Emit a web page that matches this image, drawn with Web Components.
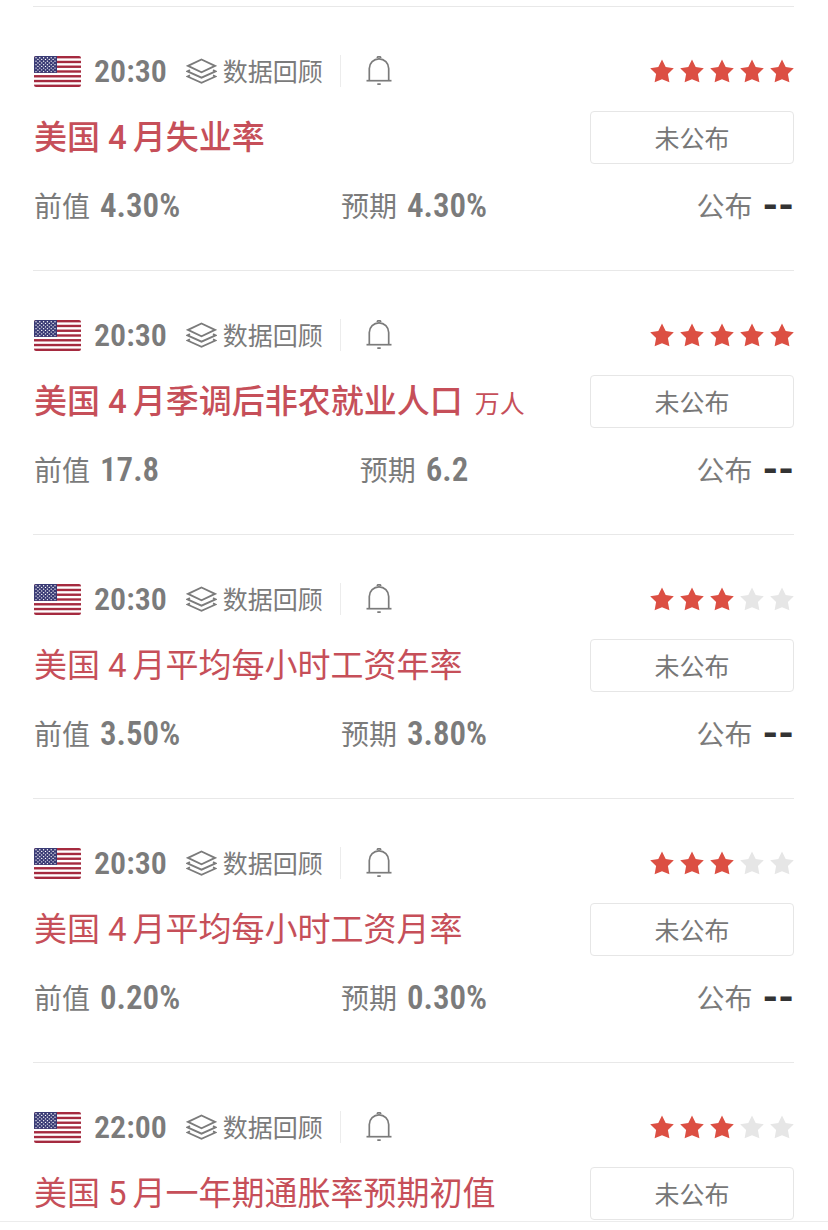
<!DOCTYPE html>
<html lang="zh-CN">
<head>
<meta charset="utf-8">
<meta name="viewport" content="width=device-width, initial-scale=1">
<title>财经日历</title>
<style>
  body {
    margin: 0;
    background: #fff;
    color: #7b7b7b;
    font-family: "Open Sans", "Noto Sans CJK SC", sans-serif;
  }
</style>
</head>
<body>
<calendar-list>
  <calendar-event time="20:30" stars="5" important previous="4.30%" forecast="4.30%">美国<span>4</span>月失业率</calendar-event>
  <calendar-event time="20:30" stars="5" important previous="17.8" forecast="6.2">美国<span>4</span>月季调后非农就业人口<small slot="unit">万人</small></calendar-event>
  <calendar-event time="20:30" stars="3" previous="3.50%" forecast="3.80%">美国<span>4</span>月平均每小时工资年率</calendar-event>
  <calendar-event time="20:30" stars="3" previous="0.20%" forecast="0.30%">美国<span>4</span>月平均每小时工资月率</calendar-event>
  <calendar-event time="22:00" stars="3">美国<span>5</span>月一年期通胀率预期初值</calendar-event>
</calendar-list>

<script>
class UsFlag extends HTMLElement {
  constructor() {
    super();
    this.attachShadow({ mode: 'open' });
    let stripes = '';
    for (let i = 0; i < 7; i++) {
      stripes += `<rect y="${i * 4.8}" width="47" height="2.4" fill="#a52a3f"/>`;
    }
    let stars = '';
    for (let row = 0; row < 9; row++) {
      const odd = row % 2;
      for (let col = 0; col < 6 - odd; col++) {
        const x = 2 + col * 3.8 + odd * 1.9;
        stars += `<circle cx="${x}" cy="${1.7 + row * 1.75}" r="0.7"/>`;
      }
    }
    this.shadowRoot.innerHTML = `
      <style>
        :host { display: block; }
        svg { display: block; border-radius: 2px; }
      </style>
      <svg width="47" height="31" viewBox="0 0 47 31.2" preserveAspectRatio="none" role="img" aria-label="美国">
        <rect width="47" height="32" fill="#fff"/>
        ${stripes}
        <rect width="23" height="17" fill="#3a3b75"/>
        <g fill="#fff">${stars}</g>
      </svg>
    `;
  }
}

class StarRating extends HTMLElement {
  constructor() {
    super();
    this.attachShadow({ mode: 'open' });
  }

  connectedCallback() {
    const value = Number(this.getAttribute('value'));
    let stars = '';
    for (let i = 0; i < 5; i++) {
      stars += `
        <svg class="${i < value ? 'on' : ''}" viewBox="0 0 24 24" aria-hidden="true">
          <path d="M12 .5l3.700 7.600 8.100 1.100-5.900 5.700 1.500 8.400L12 20.200l-7.400 3.100 1.500-8.400L.2 9.200l8.100-1.100z"/>
        </svg>`;
    }
    this.shadowRoot.innerHTML = `
      <style>
        :host { display: flex; gap: 6px; }
        svg { width: 24px; height: 24px; fill: #e6e6e6; }
        .on { fill: #dc4f43; }
      </style>
      ${stars}
    `;
  }
}

class DataReview extends HTMLElement {
  constructor() {
    super();
    this.attachShadow({ mode: 'open' });
    this.shadowRoot.innerHTML = `
      <style>
        :host { display: block; }
        a {
          display: flex;
          align-items: center;
          gap: 6px;
          color: inherit;
          text-decoration: none;
          font-size: 25px;
          line-height: 32px;
        }
        svg { display: block; }
      </style>
      <a href="#review">
        <svg width="31" height="26" viewBox="0 0 31 26" fill="none" stroke="currentColor" stroke-width="1.9" aria-hidden="true">
          <path d="M15.500 1.500L29 7.900l-13.500 6.400L2 7.900z"/>
          <path d="M4 12.100l-2.500 1.200 14 6.300 14-6.300-2.500-1.200"/>
          <path d="M4 17.300l-2.500 1.200 14 6.300 14-6.300-2.500-1.200"/>
        </svg>
        <slot></slot>
      </a>
    `;
  }
}

class RemindButton extends HTMLElement {
  constructor() {
    super();
    this.attachShadow({ mode: 'open' });
    this.shadowRoot.innerHTML = `
      <style>
        :host { display: block; }
        button {
          display: block;
          padding: 0;
          border: 0;
          background: none;
          color: inherit;
          cursor: pointer;
        }
        svg { display: block; }
      </style>
      <button type="button" aria-label="提醒">
        <svg width="26" height="30" viewBox="0 0 26 30" fill="none" stroke="currentColor" stroke-width="1.700" aria-hidden="true">
          <path d="M3.300 24.600V12.500a9.700 9.700 0 0 1 19.400 0v12.100"/>
          <path d="M.5 24.700h25"/>
          <path d="M11.300 2a1.700 1.400 0 0 1 3.400 0M11.300 28.200h3.400"/>
        </svg>
      </button>
    `;
  }
}

class DataValue extends HTMLElement {
  constructor() {
    super();
    this.attachShadow({ mode: 'open' });
    this.shadowRoot.innerHTML = `
      <style>
        :host {
          display: flex;
          align-items: center;
          gap: 10px;
          font-size: 28px;
          line-height: 40px;
        }
        b {
          font-family: "Roboto Condensed", Roboto, sans-serif;
          font-size: 33px;
          font-weight: 600;
        }
        :host([pending]) b {
          color: #333;
          font-family: Roboto, sans-serif;
          font-size: 40px;
          font-weight: 700;
        }
      </style>
      <span></span><b><slot></slot></b>
    `;
  }

  connectedCallback() {
    this.shadowRoot.querySelector('span').textContent = this.getAttribute('label');
  }
}

class CalendarEvent extends HTMLElement {
  constructor() {
    super();
    this.attachShadow({ mode: 'open' });
  }

  connectedCallback() {
    const previous = this.getAttribute('previous');
    const values = previous === null ? '' : `
      <div class="values">
        <data-value label="前值">${previous}</data-value>
        <data-value label="预期">${this.getAttribute('forecast')}</data-value>
        <data-value label="公布" pending>--</data-value>
      </div>`;

    this.shadowRoot.innerHTML = `
      <style>
        :host {
          display: block;
          margin: 0 34px 0 33px;
          padding: 48px 0 0 1px;
          border-top: 1px solid #e8e8e8;
        }
        .head {
          display: flex;
          align-items: center;
          height: 32px;
        }
        time {
          margin: 0 19px 0 13px;
          font: 600 32px/32px "Roboto Condensed", Roboto, sans-serif;
        }
        .divider {
          width: 1px;
          height: 32px;
          margin: 0 25px 0 17px;
          background: #ececec;
        }
        star-rating { margin-left: auto; }
        .main {
          display: flex;
          align-items: center;
          justify-content: space-between;
          margin-top: 24px;
        }
        h2 {
          margin: 0;
          color: #c64f59;
          font-size: 33px;
          font-weight: 400;
          line-height: 52px;
        }
        :host([important]) h2 { font-weight: 500; }
        ::slotted(span) {
          margin: 0 6px 0 8px;
          font-family: Roboto, sans-serif;
        }
        ::slotted(small) {
          margin-left: 12px;
          font-size: 25px;
          font-weight: 400;
          line-height: 32px;
        }
        .status {
          width: 204px;
          height: 53px;
          padding: 0;
          border: 1px solid #e6e6e6;
          border-radius: 4px;
          background: #fff;
          color: #777;
          font: inherit;
          font-size: 25px;
          line-height: 32px;
        }
        .values {
          display: grid;
          grid-template-columns: 1fr auto 1fr;
          padding: 22px 0 44px;
        }
        data-value:last-child { justify-self: end; }
      </style>
      <div class="head">
        <us-flag></us-flag>
        <time>${this.getAttribute('time')}</time>
        <data-review>数据回顾</data-review>
        <div class="divider"></div>
        <remind-button></remind-button>
        <star-rating value="${this.getAttribute('stars')}"></star-rating>
      </div>
      <div class="main">
        <h2><slot></slot><slot name="unit"></slot></h2>
        <button class="status" type="button">未公布</button>
      </div>
      ${values}
    `;
  }
}

class CalendarList extends HTMLElement {
  constructor() {
    super();
    this.attachShadow({ mode: 'open' });
    this.shadowRoot.innerHTML = `
      <style>
        :host {
          display: block;
          padding: 6px 0 1px;
          border-bottom: 1px solid #ececec;
        }
      </style>
      <slot></slot>
    `;
  }
}

customElements.define('us-flag', UsFlag);
customElements.define('star-rating', StarRating);
customElements.define('data-review', DataReview);
customElements.define('remind-button', RemindButton);
customElements.define('data-value', DataValue);
customElements.define('calendar-event', CalendarEvent);
customElements.define('calendar-list', CalendarList);
</script>
</body>
</html>
